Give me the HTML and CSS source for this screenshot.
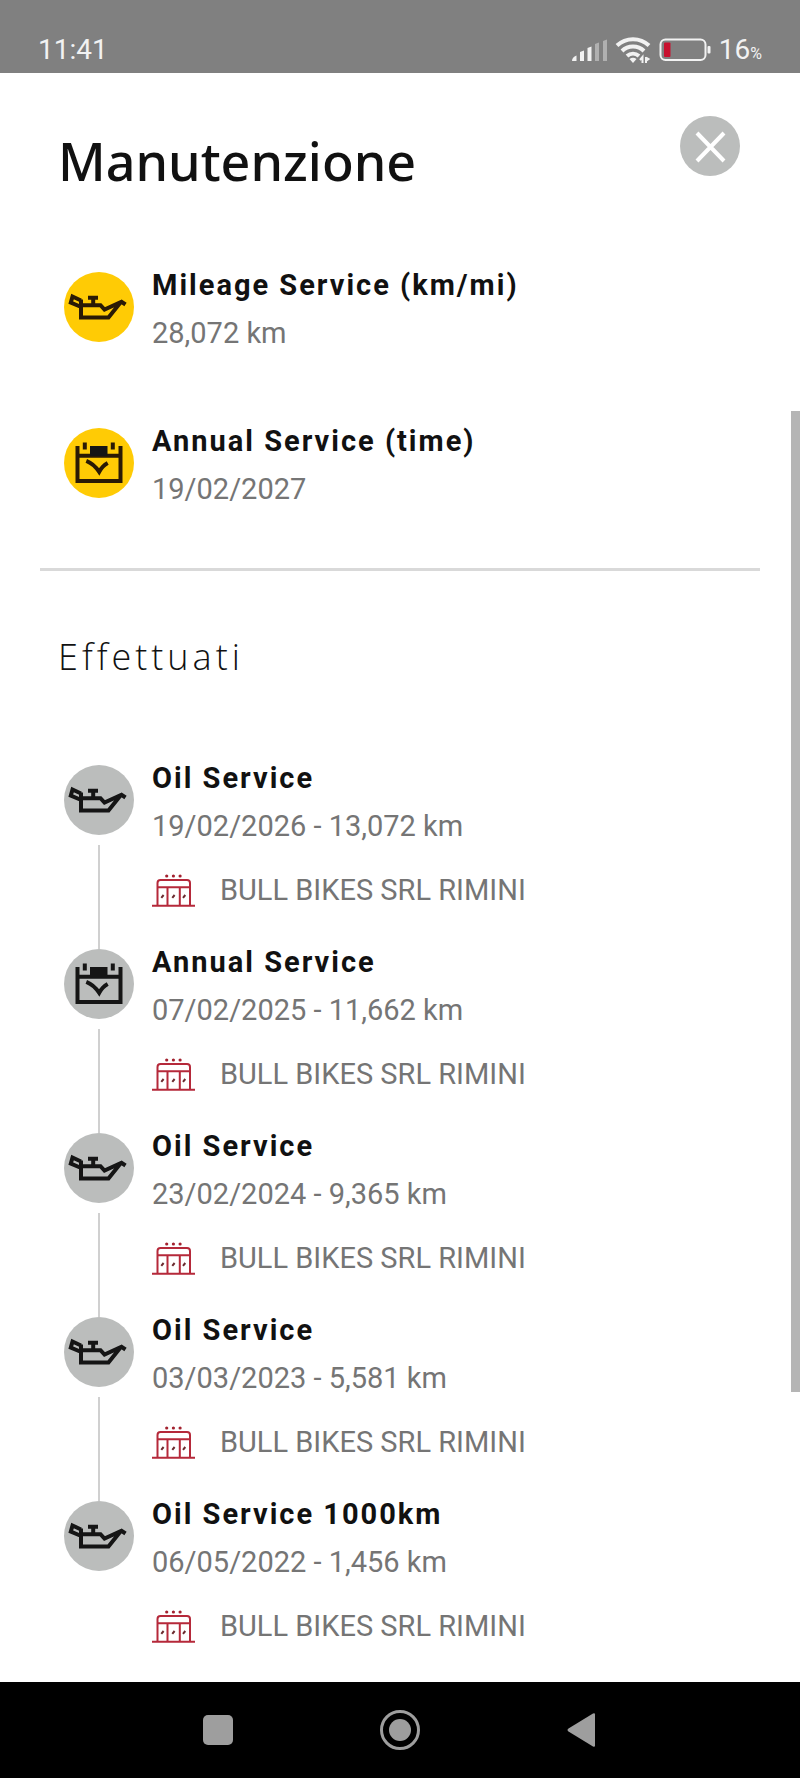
FILE: index.html
```html
<!DOCTYPE html>
<html lang="it">
<head>
  <meta charset="UTF-8" />
  <meta name="viewport" content="width=device-width, initial-scale=1.0" />
  <title>Manutenzione</title>
  <link rel="stylesheet" href="styles.css">
</head>
<body>
  <!-- Shared icons -->
  <svg class="sprite" aria-hidden="true">
    <symbol id="icon-oil" viewBox="0 0 70 70">
      <path d="M17 28.5 L8.5 24.5 L6.8 30.5 L16 34.5" />
      <path d="M17 27.5 V45.5 H44.5 L56.5 30.5 M17 33.2 H36.5 L40.5 37.5 L57.5 29.8 L61.5 32.5" />
      <path d="M24 25.8 H34 M29.2 26 V33" />
    </symbol>
    <symbol id="icon-calendar" viewBox="0 0 70 70">
      <path d="M13.5 18 V53 H56.5 V18 M13.5 27.8 H56.5" />
      <path d="M20.8 14.5 V21.5 M48.8 14.5 V21.5" />
      <path d="M22.3 32.8 C28 35 32 39 35.2 43.8 C37.5 39.5 40 37 43.7 35" />
      <rect class="solid" x="26" y="18" width="17.5" height="10" />
    </symbol>
    <symbol id="icon-dealer" viewBox="2 0 44 36">
      <path d="M2 33.7 H45 M7.5 33.5 V11 Q7.5 8 10.5 8 H37 Q40 8 40 11 V33.5 M7.5 15.2 H40 M17.5 15.2 V33.5 M29.8 15.2 V33.5" />
      <path class="dark" d="M11.3 25.8 L13.6 23 M22.3 25.8 L24.6 23 M33 25.8 L35.3 23" />
      <g class="dots">
        <circle cx="16.7" cy="4" r="1.6" />
        <circle cx="23.4" cy="4" r="1.6" />
        <circle cx="30.1" cy="4" r="1.6" />
      </g>
    </symbol>
  </svg>

  <header class="status-bar">
    <span class="clock">11:41</span>
    <div class="status-icons">
      <svg class="signal" viewBox="0 0 36 24" aria-hidden="true">
        <path d="M1 23 Q1 19 5.5 17.5 V23 Z M9 14 L13 12.5 V23 H9 Z M16.5 10 L20.5 8.5 V23 H16.5 Z" />
        <path class="weak" d="M24 6 L28 4.5 V23 H24 Z M32 3 L36 1.5 V23 H32 Z" />
      </svg>
      <svg class="wifi" viewBox="0 0 36 28" aria-hidden="true">
        <path class="arc" d="M2 9.5 C11 1 25 1 34 9.5 M7 15 C13 9 23 9 29 15 M12 20 C15.5 17 20.5 17 24 20" />
        <path d="M14.5 23 Q18 20.5 21.5 23 L18 27 Z" />
        <path class="arrows" d="M27.5 27 V21 L25 24 M31 21 V27 M31 21.5 L33.5 23 L31.5 24.5" />
      </svg>
      <svg class="battery" viewBox="0 0 52 24" aria-hidden="true">
        <rect class="shell" x="1.5" y="1.5" width="45" height="20.5" rx="5" />
        <rect class="level" x="5" y="4.5" width="6.5" height="14.5" rx="1" />
        <rect x="48.5" y="8" width="3" height="7.5" rx="1" />
      </svg>
      <span class="charge">16<small>%</small></span>
    </div>
  </header>

  <main class="page">
    <div class="page-header">
      <h1 class="page-title">Manutenzione</h1>
      <button class="close-button" type="button" aria-label="Chiudi">
        <svg viewBox="0 0 60 60" aria-hidden="true">
          <path d="M17 17 L44 45 M44 17 L17 45" />
        </svg>
      </button>
    </div>

    <ul class="services">
      <li class="service">
        <svg class="service-icon due"><use href="#icon-oil" /></svg>
        <div class="service-body">
          <h3 class="service-name">Mileage Service (km/mi)</h3>
          <p class="service-info">28,072 km</p>
        </div>
      </li>
      <li class="service">
        <svg class="service-icon due"><use href="#icon-calendar" /></svg>
        <div class="service-body">
          <h3 class="service-name">Annual Service (time)</h3>
          <p class="service-info">19/02/2027</p>
        </div>
      </li>
    </ul>

    <hr class="divider">

    <h2 class="section-title">Effettuati</h2>

    <ol class="timeline">
      <li class="service">
        <div class="rail"><svg class="service-icon"><use href="#icon-oil" /></svg></div>
        <div class="service-body">
          <h3 class="service-name">Oil Service</h3>
          <p class="service-info">19/02/2026 - 13,072 km</p>
          <p class="dealer"><svg class="dealer-icon"><use href="#icon-dealer" /></svg>BULL BIKES SRL RIMINI</p>
        </div>
      </li>
      <li class="service">
        <div class="rail"><svg class="service-icon"><use href="#icon-calendar" /></svg></div>
        <div class="service-body">
          <h3 class="service-name">Annual Service</h3>
          <p class="service-info">07/02/2025 - 11,662 km</p>
          <p class="dealer"><svg class="dealer-icon"><use href="#icon-dealer" /></svg>BULL BIKES SRL RIMINI</p>
        </div>
      </li>
      <li class="service">
        <div class="rail"><svg class="service-icon"><use href="#icon-oil" /></svg></div>
        <div class="service-body">
          <h3 class="service-name">Oil Service</h3>
          <p class="service-info">23/02/2024 - 9,365 km</p>
          <p class="dealer"><svg class="dealer-icon"><use href="#icon-dealer" /></svg>BULL BIKES SRL RIMINI</p>
        </div>
      </li>
      <li class="service">
        <div class="rail"><svg class="service-icon"><use href="#icon-oil" /></svg></div>
        <div class="service-body">
          <h3 class="service-name">Oil Service</h3>
          <p class="service-info">03/03/2023 - 5,581 km</p>
          <p class="dealer"><svg class="dealer-icon"><use href="#icon-dealer" /></svg>BULL BIKES SRL RIMINI</p>
        </div>
      </li>
      <li class="service">
        <div class="rail"><svg class="service-icon"><use href="#icon-oil" /></svg></div>
        <div class="service-body">
          <h3 class="service-name">Oil Service 1000km</h3>
          <p class="service-info">06/05/2022 - 1,456 km</p>
          <p class="dealer"><svg class="dealer-icon"><use href="#icon-dealer" /></svg>BULL BIKES SRL RIMINI</p>
        </div>
      </li>
    </ol>

    <div class="scroll-thumb"></div>
  </main>

  <nav class="nav-bar">
    <button class="nav-button" type="button" aria-label="App recenti">
      <svg viewBox="0 0 40 40" aria-hidden="true"><rect x="4" y="5" width="30" height="30" rx="5" /></svg>
    </button>
    <button class="nav-button" type="button" aria-label="Home">
      <svg viewBox="0 0 40 40" aria-hidden="true">
        <circle class="ring" cx="20" cy="20" r="18.5" />
        <circle cx="20" cy="20" r="11" />
      </svg>
    </button>
    <button class="nav-button" type="button" aria-label="Indietro">
      <svg viewBox="0 0 40 40" aria-hidden="true"><path d="M7.5 18.5 L32 3.5 Q34 2.5 34 4.5 V35.5 Q34 37.5 32 36.5 L7.5 21.5 Q5.5 20 7.5 18.5 Z" /></svg>
    </button>
  </nav>
</body>
</html>
```
FILE: styles.css
```css
* {
  margin: 0;
  padding: 0;
  box-sizing: border-box;
}

body {
  font-family: Roboto, "Liberation Sans", sans-serif;
  background: #fff;
  color: #111;
  min-height: 100vh;
  display: flex;
  flex-direction: column;
}

ul,
ol {
  list-style: none;
}

button {
  border: none;
  background: none;
  cursor: pointer;
}

.sprite {
  position: absolute;
  width: 0;
  height: 0;
}

/* Status bar */
.status-bar {
  display: flex;
  justify-content: space-between;
  align-items: flex-end;
  padding: 32px 38px 5px;
  background: #808080;
  color: #f2f2f2;
}

.clock,
.charge {
  font-size: 28px;
  line-height: 36px;
}

.charge small {
  font-size: 16px;
  line-height: 1;
}

.status-icons {
  display: flex;
  align-items: center;
  gap: 8px;
  fill: #f2f2f2;
}

.signal {
  width: 36px;
  height: 24px;
}

.signal .weak {
  fill: #b0b0b0;
}

.wifi {
  width: 36px;
  height: 28px;
}

.wifi .arc {
  fill: none;
  stroke: #f2f2f2;
  stroke-width: 4;
}

.wifi .arrows {
  fill: none;
  stroke: #f2f2f2;
  stroke-width: 2;
}

.battery {
  width: 52px;
  height: 24px;
}

.battery .shell {
  fill: none;
  stroke: #f2f2f2;
  stroke-width: 2;
}

.battery .level {
  fill: #c8102e;
}

/* Page */
.page {
  position: relative;
  flex: 1;
  padding: 43px 40px 32px;
}

.page-header {
  display: flex;
  justify-content: space-between;
  align-items: flex-start;
  padding: 0 20px 0 18px;
}

.page-title {
  padding-top: 9px;
  font-family: "Noto Sans", "Open Sans", sans-serif;
  font-size: 52px;
  font-weight: 500;
  line-height: 72px;
}

.close-button {
  width: 60px;
  height: 60px;
  border-radius: 50%;
  background: #bbbdbc;
}

.close-button svg {
  display: block;
  fill: none;
  stroke: #fff;
  stroke-width: 4;
}

.services {
  display: flex;
  flex-direction: column;
  gap: 75px;
  padding: 75px 24px 59px;
}

.service {
  display: flex;
  gap: 18px;
}

.service-icon {
  display: block;
  flex: none;
  width: 70px;
  height: 70px;
  border-radius: 50%;
  background: #bbbdbc;
  fill: none;
  stroke: #151515;
  stroke-width: 4;
}

.service-icon.due {
  background: #ffcb05;
  stroke: #2a1a05;
}

.solid {
  fill: #151515;
  stroke: none;
}

.service-body {
  flex: 1;
  margin-top: -5px;
}

.service-name {
  font-size: 29px;
  font-weight: 700;
  line-height: 36px;
  letter-spacing: 2px;
}

.service-info {
  margin-top: 10px;
  font-size: 29px;
  line-height: 40px;
  color: #757575;
}

.divider {
  height: 3px;
  border: none;
  background: #d9d9d9;
}

.section-title {
  padding: 60px 18px 0;
  font-family: "Open Sans", "Noto Sans", sans-serif;
  font-size: 36px;
  font-weight: 300;
  line-height: 52px;
  letter-spacing: 4px;
}

/* Timeline */
.timeline {
  padding: 82px 24px 0;
}

.rail {
  display: flex;
  flex-direction: column;
  align-items: center;
}

.timeline .service:not(:last-child) .service-body {
  padding-bottom: 39px;
}

.timeline .service:not(:last-child) .rail::after {
  content: "";
  flex: 1;
  width: 2px;
  margin-top: 10px;
  background: #d0d0d0;
}

.dealer {
  display: flex;
  align-items: center;
  gap: 24px;
  margin-top: 24px;
  font-size: 29px;
  line-height: 40px;
  color: #757575;
}

.dealer-icon {
  width: 44px;
  height: 36px;
  fill: none;
  stroke: #b5293a;
  stroke-width: 2;
}

.dark {
  stroke: #6b2a2f;
}

.dots {
  fill: #a3222f;
  stroke: none;
}

.scroll-thumb {
  position: absolute;
  top: 21%;
  right: 0;
  width: 9px;
  height: 61%;
  background: #b5b5b5;
}

/* Navigation bar */
.nav-bar {
  display: grid;
  grid-template-columns: repeat(3, 1fr);
  justify-items: center;
  align-items: center;
  padding: 28px 16%;
  background: #000;
}

.nav-button {
  width: 40px;
  height: 40px;
}

.nav-button svg {
  display: block;
  fill: #9e9e9e;
}

.nav-button .ring {
  fill: none;
  stroke: #9e9e9e;
  stroke-width: 3;
}
```
